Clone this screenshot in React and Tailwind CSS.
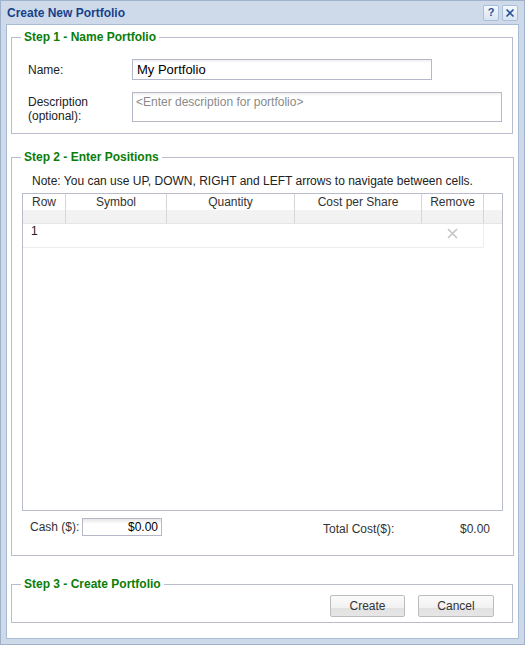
import React from 'react';

const font = { fontFamily: '"Liberation Sans", Arial, sans-serif' };

function TitleTool({ children }) {
	return (
		<div className="flex h-[16px] w-[16px] items-center justify-center rounded-[2px] border border-[#a9bfd9] bg-gradient-to-b from-[#f4f8fc] to-[#d9e5f2] text-[11px] font-bold leading-none text-[#2a5298]">
			{children}
		</div>
	);
}

function Legend({ children }) {
	return (
		<legend className="ml-[9px] px-[3px] text-[12px] font-bold leading-[14px] text-[#0a7d0a]">
			{children}
		</legend>
	);
}

function Button({ children, width }) {
	return (
		<button
			className={`h-[22px] ${width} rounded-[2px] border border-[#bcbcbc] bg-[linear-gradient(#fbfbfb_0%,#f1f1f1_60%,#e2e2e2_61%,#e6e6e6_100%)] text-[12px] text-[#333]`}
		>
			{children}
		</button>
	);
}

const columns = [
	{ name: 'Row', w: 'w-[43px]' },
	{ name: 'Symbol', w: 'w-[101px]' },
	{ name: 'Quantity', w: 'w-[128px]' },
	{ name: 'Cost per Share', w: 'w-[127px]' },
	{ name: 'Remove', w: 'w-[62px]' },
];

export default function App() {
	return (
		<div
			className="flex h-[645px] w-[525px] flex-col border border-[#9fb2cc] bg-[#cedaea]"
			style={font}
		>
			<div className="flex h-[23px] items-center justify-between pl-[6px] pr-[6px]">
				<span className="text-[12px] font-bold text-[#15428b]">Create New Portfolio</span>
				<div className="flex gap-[3px]">
					<TitleTool>?</TitleTool>
					<TitleTool>
						<svg width="10" height="10" viewBox="0 0 10 10">
							<path d="M1.5 1.5 L8.5 8.5 M8.5 1.5 L1.5 8.5" stroke="#2a5298" strokeWidth="1.6" />
						</svg>
					</TitleTool>
				</div>
			</div>

			<div className="mx-[5px] flex h-[615px] flex-col border border-[#a9bcd6] bg-white px-[4px] pt-[5px]">
				{/* Step 1 */}
				<fieldset className="w-[502px] border border-[#b8bccb] pb-[10px]">
					<Legend>Step 1 - Name Portfolio</Legend>
					<div className="pl-[16px]">
						<div className="mt-[15px] flex items-center">
							<label className="w-[104px] text-[12px] text-[#222]">Name:</label>
							<div className="flex h-[21px] w-[300px] items-center border border-[#b5b8c8] bg-[linear-gradient(#eeeeee_0px,#ffffff_3px)] px-[4px] text-[13px] text-black">
								My Portfolio
							</div>
						</div>
						<div className="mt-[12px] flex items-start">
							<label className="w-[104px] pt-[3px] text-[12px] leading-[14px] text-[#222]">
								Description
								<br />
								(optional):
							</label>
							<div className="h-[30px] w-[370px] border border-[#b5b8c8] bg-[linear-gradient(#eeeeee_0px,#ffffff_3px)] px-[3px] pt-[2px] text-[12px] leading-[14px] text-[#8a8a8a]">
								&lt;Enter description for portfolio&gt;
							</div>
						</div>
					</div>
				</fieldset>

				{/* Step 2 */}
				<fieldset className="mt-[16px] w-[502px] border border-[#b8bccb] pb-[19px]">
					<Legend>Step 2 - Enter Positions</Legend>
					<div className="px-[10px]">
						<div className="mt-[10px] pl-[10px] text-[12px] leading-[14px] text-[#222]">
							Note: You can use UP, DOWN, RIGHT and LEFT arrows to navigate between cells.
						</div>
						<div className="mt-[5px] h-[318px] w-[481px] border border-[#b9bccd]">
							<div className="flex h-[30px] border-b border-[#e6e6e6] bg-[linear-gradient(#ffffff_0%,#ffffff_55%,#f3f3f3_56%,#f1f1f1_100%)]">
								{columns.map((c) => (
									<div
										key={c.name}
										className={`${c.w} border-r border-[#d6d6d6] pt-[1px] text-center text-[12px] leading-[14px] text-[#333]`}
									>
										{c.name}
									</div>
								))}
							</div>
							<div className="flex h-[24px] w-[461px] items-start border-r border-b border-[#ededed]">
								<div className="w-[43px] pl-[8px] text-[12px] leading-[14px] text-[#222]">1</div>
								<div className="w-[356px]" />
								<div className="mt-[4px] flex w-[62px] justify-center">
									<svg width="11" height="11" viewBox="0 0 11 11">
										<path d="M1 1 L10 10 M10 1 L1 10" stroke="#c2c2c2" strokeWidth="1.5" />
									</svg>
								</div>
							</div>
						</div>
						<div className="mt-[7px] flex items-start pl-[8px]">
							<span className="w-[52px] text-[12px] leading-[18px] text-[#333]">Cash ($):</span>
							<div className="flex h-[18px] w-[80px] items-center justify-end border border-[#b5b8c8] bg-[linear-gradient(#e6e6e6_0px,#ffffff_5px)] pr-[3px] text-[12px] text-black">
								$0.00
							</div>
							<span className="ml-[161px] w-[137px] translate-y-[2px] text-[12px] leading-[18px] text-[#333]">
								Total Cost($):
							</span>
							<span className="translate-y-[2px] text-[12px] leading-[18px] text-[#333]">$0.00</span>
						</div>
					</div>
				</fieldset>

				{/* Step 3 */}
				<fieldset className="mt-[21px] w-[502px] border border-[#b8bccb] pb-[5px] pr-[18px]">
					<Legend>Step 3 - Create Portfolio</Legend>
					<div className="mt-[4px] flex justify-end gap-[13px]">
						<Button width="w-[75px]">Create</Button>
						<Button width="w-[76px]">Cancel</Button>
					</div>
				</fieldset>
			</div>
		</div>
	);
}
